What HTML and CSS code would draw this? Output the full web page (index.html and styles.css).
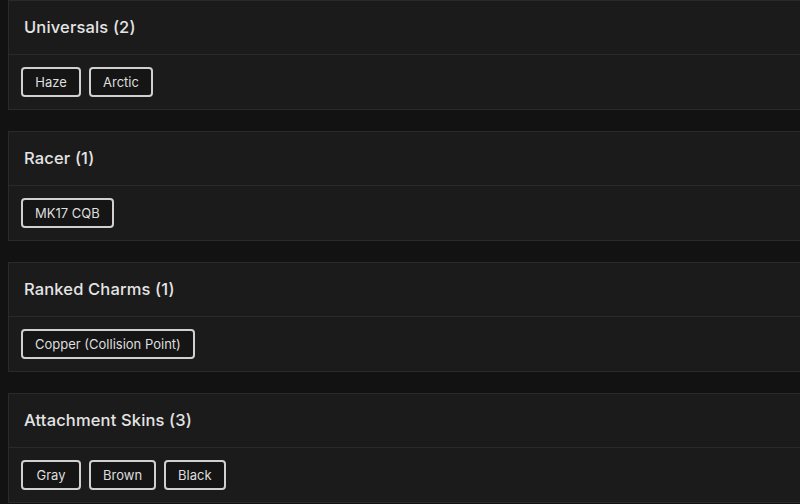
FILE: index.html
```html
<!DOCTYPE html>
<html>
<head>
<meta charset="utf-8">
<link rel="stylesheet" href="styles.css">
</head>
<body>
<div class="page">
  <section class="card">
    <div class="card-head">Universals (2)</div>
    <div class="card-body">
      <span class="tag">Haze</span>
      <span class="tag">Arctic</span>
    </div>
  </section>
  <section class="card">
    <div class="card-head">Racer (1)</div>
    <div class="card-body">
      <span class="tag">MK17 CQB</span>
    </div>
  </section>
  <section class="card">
    <div class="card-head">Ranked Charms (1)</div>
    <div class="card-body">
      <span class="tag">Copper (Collision Point)</span>
    </div>
  </section>
  <section class="card">
    <div class="card-head">Attachment Skins (3)</div>
    <div class="card-body">
      <span class="tag">Gray</span>
      <span class="tag">Brown</span>
      <span class="tag">Black</span>
    </div>
  </section>
</div>
</body>
</html>
```
FILE: styles.css
```css
html, body {
  margin: 0;
  padding: 0;
  background: #121212;
  overflow: hidden;
  font-family: Inter, "Open Sans", sans-serif;
}
.page {
  width: 820px;
  padding-left: 8px;
  display: flex;
  flex-direction: column;
  gap: 21px;
}
.card {
  background: #1b1b1b;
  border: 1px solid #2a2a2a;
}
.card-head {
  height: 54px;
  box-sizing: border-box;
  padding: 0 15px 2px;
  display: flex;
  align-items: center;
  color: #e4e4e4;
  font-size: 16.5px;
  font-weight: 500;
  letter-spacing: 0.15px;
  border-bottom: 1px solid #2a2a2a;
}
.card-body {
  padding: 12px;
  display: flex;
  gap: 8px;
}
.tag {
  min-width: 60px;
  height: 30px;
  box-sizing: border-box;
  padding: 0 12px;
  display: inline-flex;
  align-items: center;
  justify-content: center;
  border: 2px solid #d0d0d0;
  border-radius: 4px;
  background: #151515;
  color: #dedede;
  font-size: 13px;
}
```
